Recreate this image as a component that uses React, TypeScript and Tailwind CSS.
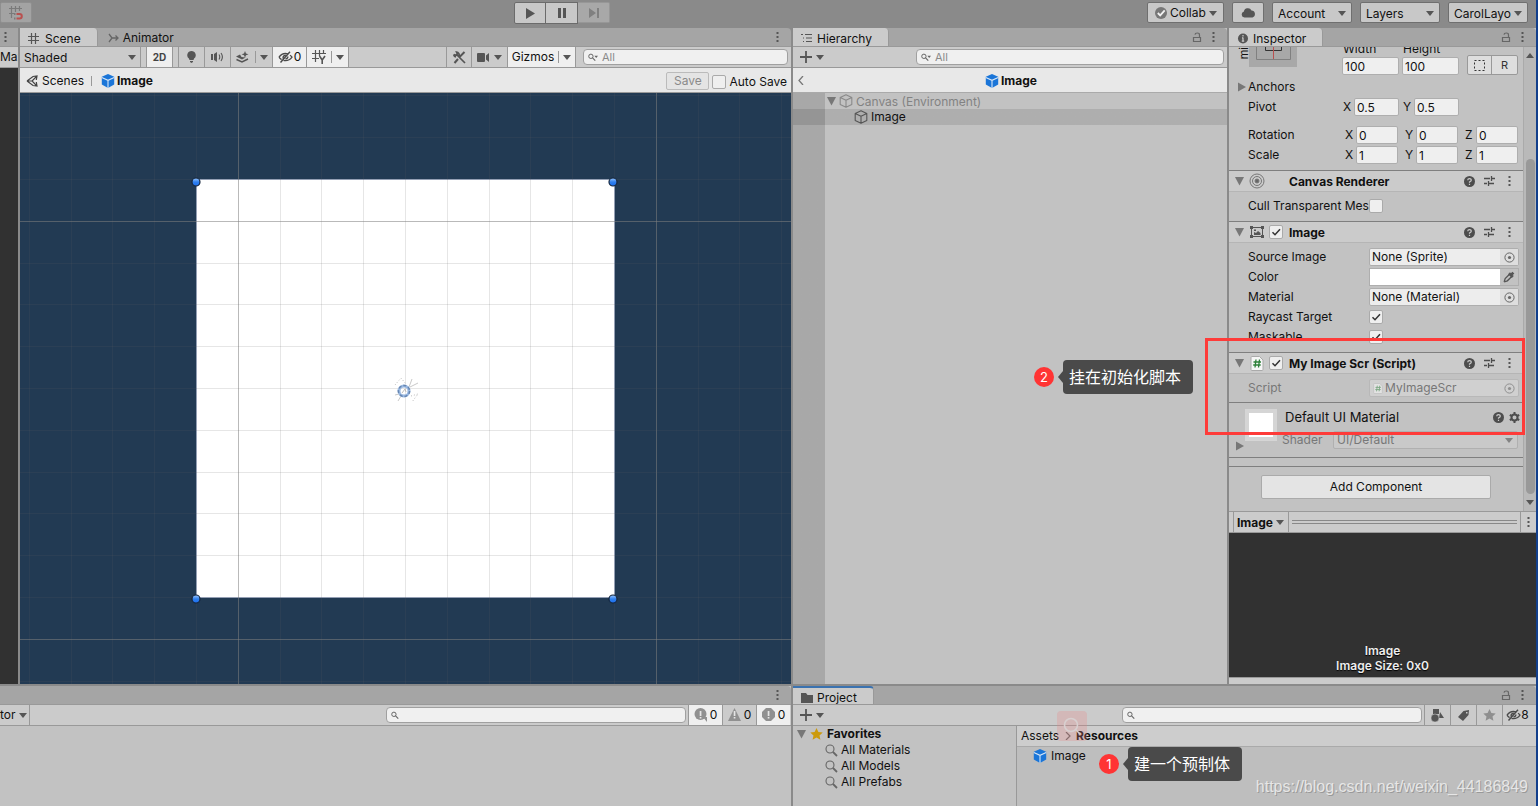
import type { ReactNode } from "react";

const FONT = "font-['Inter','Noto_Sans_CJK_SC',sans-serif]";

/* ---------- icons ---------- */

const Caret = ({ className = "" }: { className?: string }) => (
  <svg width="8" height="5" viewBox="0 0 8 5" className={`pointer-events-none shrink-0 fill-[#555] ${className}`}><path d="M0 0h8L4 5z" /></svg>
);

const Fold = ({ open = true }: { open?: boolean }) => (
  <svg width="10" height="10" viewBox="0 0 10 10" className="shrink-0 fill-[#777]">
    {open ? <path d="M1 1h9L5.5 9.5z" /> : <path d="M2 0.5v9L10 5z" />}
  </svg>
);

const Dots = () => (
  <svg width="3" height="11" viewBox="0 0 3 11" className="shrink-0 fill-[#555]"><path d="M.5 0h2v2h-2zM.5 4h2v2h-2zM.5 8h2v2h-2z" /></svg>
);

const Lock = () => (
  <svg width="10" height="11" viewBox="0 0 10 11" className="shrink-0 fill-none stroke-[#666]"><path d="M1.5 5.5h7v4h-7zM7.5 5V3Q7.5 1 5.3 1T3 2.6" strokeWidth="1.2" /></svg>
);

const HashGrid = ({ color = "#555", y = false, magnet = false }: { color?: string; y?: boolean; magnet?: boolean }) => (
  <svg width={y || magnet ? 15 : 13} height="14" viewBox={y || magnet ? "0 0 15 14" : "0 0 13 14"} className="shrink-0 fill-none" stroke={color}>
    {y ? (
      <>
        <path d="M3.5 0v12M7.5 0v6M11.5 0v4M0 3.5h14M0 8.5h7" strokeWidth="1.2" />
        <path d="M7.5 6l2.7 4M13 6l-2.8 4v4" strokeWidth="1.6" />
      </>
    ) : magnet ? (
      <>
        <path d="M2.5 0v12M6.5 0v6M10.5 0v5M0 2.5h13M0 7.5h5" strokeWidth="1.2" />
        <path d="M7.5 8h3a2 2 0 0 1 0 4.6h-3" stroke="#b9504f" strokeWidth="2" />
        <path d="M5 8h1.5M5 12.6h1.5" strokeWidth="2" />
      </>
    ) : (
      <path d="M3.500 1v11M7.500 1v11M0 4.500h11M0 8.500h11" strokeWidth="1.2" />
    )}
  </svg>
);

const Cube = ({ outline = "" }: { outline?: string }) =>
  outline ? (
    <svg width="14" height="14" viewBox="0 0 14 14" className="shrink-0 fill-none" stroke={outline}>
      <path d="M7 .8l5.8 2.6v7L7 13.3 1.2 10.4v-7zM1.2 3.6L7 6.3l5.8-2.7M7 6.3v7" strokeWidth="1.1" strokeLinejoin="round" />
    </svg>
  ) : (
    <svg width="14" height="14" viewBox="0 0 14 14" className="shrink-0">
      <path d="M7 0l6.2 2.7v7.8L7 14 .8 10.5V2.7z" fill="#1a75d8" />
      <path d="M.8 3.4L7 6.3l6.2-2.9M7 6.3V14" fill="none" stroke="#d5e6f7" strokeWidth="1.1" />
    </svg>
  );

const Magnifier = ({ caret = false }: { caret?: boolean }) => (
  <svg width="10" height="9" viewBox="0 0 11 9" className="shrink-0 fill-none stroke-[#666]">
    <circle cx="3.2" cy="3.2" r="2.4" strokeWidth="1.1" />
    <path d="M5 5l3 3" strokeWidth="1.3" />
    {caret && <path d="M7 2.6h4L9 5z" fill="#666" stroke="none" />}
  </svg>
);

const BigMagnifier = () => (
  <svg width="13" height="13" viewBox="0 0 13 13" className="shrink-0 fill-none stroke-[#666]"><circle cx="5" cy="5" r="4" strokeWidth="1.1" /><path d="M8 8l4 4" strokeWidth="1.8" /></svg>
);

const EyeOff = () => (
  <svg width="15" height="12" viewBox="0 0 15 12" className="shrink-0 fill-none stroke-[#4a4a4a]">
    <path d="M1 6.2Q3.5 2.5 7.5 2.5q1.5 0 2.5.4M12 4.2q1.3.9 2 2Q11.5 9.7 7.5 9.7q-1 0-2-.3M3.6 8.6Q2 7.6 1 6.2" strokeWidth="1.3" />
    <path d="M5.2 7.6Q4.5 4.6 7.8 4.2M7.5 8Q9.8 7.8 9.9 5.5M2.5 11.5L12 .8" strokeWidth="1.4" />
  </svg>
);

const Help = () => (
  <svg width="11" height="11" viewBox="0 0 10 10" className="shrink-0">
    <circle cx="5" cy="5" r="5" fill="#4d4d4d" />
    <path d="M3.4 3.9Q3.4 2.4 5 2.4T6.6 3.8Q6.6 4.6 5 5.4v.7M5 7v1.2" fill="none" stroke="#cbcbcb" strokeWidth="1.1" />
  </svg>
);

const Presets = () => (
  <svg width="11" height="10" viewBox="0 0 11 10" className="shrink-0 fill-none stroke-[#4d4d4d]"><path d="M0 2.500h6M8 2.500h3M7.500 0v5M0 7.500h3M5 7.500h5M4.500 5v5" strokeWidth="1.3" /></svg>
);

const Gear = () => (
  <svg width="11" height="11" viewBox="0 0 11 11" className="shrink-0 fill-none stroke-[#4d4d4d]">
    <circle cx="5.5" cy="5.5" r="3" strokeWidth="2" />
    <path d="M5.5 0v2M5.5 9v2M.8 2.8l1.7 1M8.5 7.2l1.7 1M.8 8.2l1.7-1M8.5 3.8l1.7-1" strokeWidth="2" />
  </svg>
);

const CsFile = ({ size = 14, faded = false }: { size?: number; faded?: boolean }) => (
  <svg width={size} height={size + 1} viewBox="0 0 14 15" className={`shrink-0 ${faded ? "opacity-50" : ""}`}>
    <path d="M1 1.5Q1 .5 2 .5h7.5L13 4v9.5q0 1-1 1H2q-1 0-1-1z" fill="#f6f6f6" stroke="#aaa" />
    <path d="M6 3.500L5 11.500M9.500 3.500l-1 8M3.5 6h7.500M3.2 9h7.500" stroke="#2c8038" strokeWidth="1.3" />
  </svg>
);

const Picker = () => (
  <svg width="11" height="11" viewBox="0 0 11 11" className="shrink-0"><circle cx="5.5" cy="5.5" r="4.6" fill="none" stroke="#666" /><circle cx="5.5" cy="5.5" r="1.6" fill="#666" /></svg>
);

const Star = ({ color }: { color: string }) => (
  <svg width="13" height="12" viewBox="0 0 13 12" className="shrink-0"><path fill={color} d="M6.5 0l1.9 4 4.3.5-3.2 3 .9 4.3-3.9-2.2-3.9 2.2.9-4.3-3.2-3L4.6 4z" /></svg>
);

/* ---------- shared controls ---------- */

function TabStrip({ icon, title, lock, focused, children }: { icon?: ReactNode; title?: string; lock?: boolean; focused?: boolean; children?: ReactNode }) {
  return (
    <div className="flex h-[19px] shrink-0 overflow-hidden rounded-tr border-b border-[#999] bg-[#a5a5a5]">
      {title && (
        <button className={`-mb-px flex h-[19px] items-center gap-1 rounded-tr border-r border-[#999] bg-[#cbcbcb] pl-2 pr-4 pt-0.5 ${focused ? "border-t-2 border-t-[#3a72b0] pt-0" : ""}`}>
          {icon}
          <span>{title}</span>
        </button>
      )}
      {children}
      <div className="ml-auto flex items-center gap-2 pr-3">
        {lock && <button aria-label="Lock" className="mr-0.5"><Lock /></button>}
        <button aria-label="Tab menu"><Dots /></button>
      </div>
    </div>
  );
}

const Toolbar = ({ children }: { children: ReactNode }) => (
  <div className="flex h-[21px] shrink-0 items-center border-b border-[#999] bg-[#cbcbcb]">{children}</div>
);

function Search({ label, placeholder, className }: { label: string; placeholder?: string; className: string }) {
  return (
    <label className={`flex h-4 items-center gap-1 rounded border border-[#a0a0a0] bg-[#f0f0f0] px-1 ${className}`}>
      <Magnifier caret={!!placeholder} />
      <input aria-label={label} placeholder={placeholder} className="h-3.5 w-full min-w-0 bg-transparent text-[11px] outline-none placeholder:text-[#8a8a8a]" />
    </label>
  );
}

function ToolButton({ label, on, className, children }: { label: string; on?: boolean; className: string; children: ReactNode }) {
  return (
    <button aria-label={label} className={`flex h-5 shrink-0 items-center justify-center border-[#999] ${on ? "bg-[#efefef]" : "bg-[#cbcbcb]"} ${className}`}>
      {children}
    </button>
  );
}

function TopSelect({ label, value, className }: { label: string; value: string; className: string }) {
  return (
    <div className={`relative h-[21px] rounded-xs border border-[#6f6f6f] bg-[#c8c8c8] ${className}`}>
      <select aria-label={label} className="h-full w-full appearance-none pl-[5px] pt-0.5 outline-none"><option>{value}</option></select>
      <Caret className="absolute right-[5px] top-2" />
    </div>
  );
}

const Check = ({ label, checked = false }: { label: string; checked?: boolean }) => (
  <span className="relative flex size-3.5 shrink-0">
    <input type="checkbox" aria-label={label} defaultChecked={checked} className="peer size-3.5 appearance-none rounded-xs border border-[#aaa] bg-[#efefef]" />
    <svg viewBox="0 0 14 14" className="pointer-events-none absolute inset-0 hidden fill-none stroke-[#333] peer-checked:block"><path d="M3.5 7.2L6 9.7l5-5.5" strokeWidth="1.5" /></svg>
  </span>
);

const NumField = ({ label, value, className = "w-[42px]" }: { label: string; value: string; className?: string }) => (
  <input aria-label={label} defaultValue={value} className={`h-[18px] rounded-xs border border-[#aeaeae] bg-[#efefef] pl-0.5 outline-none ${className}`} />
);

/* ---------- top bar ---------- */

function TopBar() {
  return (
    <header className="flex h-7 shrink-0 items-start bg-[#8a8a8a] pt-0.5">
      <button aria-label="Grid snapping" className="flex h-[21px] w-8 items-center justify-center rounded-xs border border-[#8f8f8f] bg-[#a3a3a3]"><HashGrid color="#7a7a7a" magnet /></button>
      <div className="flex-[482]" />
      <div className="flex">
        <button aria-label="Play" className="flex h-[22px] w-8 items-center justify-center rounded-l-xs border border-[#6b6b6b] bg-[#c8c8c8]"><svg width="9" height="11" className="fill-[#555]"><path d="M0 0l9 5.5L0 11z" /></svg></button>
        <button aria-label="Pause" className="-ml-px flex h-[22px] w-[33px] items-center justify-center border border-[#6b6b6b] bg-[#c8c8c8]"><svg width="8" height="10" className="fill-[#555]"><path d="M0 0h3v10H0zM5 0h3v10H5z" /></svg></button>
        <button aria-label="Step" disabled className="flex h-[21px] w-8 items-center justify-center rounded-r-xs border border-l-0 border-[#979797] bg-[#a8a8a8]"><svg width="10" height="10" className="fill-[#808080]"><path d="M0 0l7 5-7 5zM8 0h2v10H8z" /></svg></button>
      </div>
      <div className="flex-[536]" />
      <div className="flex gap-2 pr-2">
        <button className="flex h-[21px] w-[77px] items-center gap-[3px] rounded-xs border border-[#6f6f6f] bg-[#c8c8c8] pl-[7px] pt-px">
          <svg width="12" height="12" viewBox="0 0 12 12"><circle cx="6" cy="6" r="6" fill="#777" /><path d="M2.8 6l2.4 2.4 4.5-5" fill="none" stroke="#f2f2f2" strokeWidth="1.8" /></svg>
          Collab <Caret />
        </button>
        <button aria-label="Services" className="flex h-[21px] w-8 items-center justify-center rounded-xs border border-[#6f6f6f] bg-[#c8c8c8]"><svg width="15" height="11" viewBox="0 0 15 11" className="fill-[#555]"><path d="M3.5 10.5a3 3 0 0 1-.6-5.9A4 4 0 0 1 10.5 3.500A3.600 3.600 0 0 1 11.5 10.500z" /></svg></button>
        <TopSelect label="Account" value="Account" className="w-20" />
        <TopSelect label="Layers" value="Layers" className="w-20" />
        <TopSelect label="Layout" value="CarolLayo" className="w-20" />
      </div>
    </header>
  );
}

/* ---------- scene ---------- */

const CELL = 41.8;
const LEFT = 176;
const TOP = 86;

function SceneCanvas() {
  const xs = Array.from({ length: 60 }, (_, i) => i - 4);
  const ys = Array.from({ length: 40 }, (_, i) => i - 2);
  const line = (n: number) => (((n - 1) % 10) === 0 ? "#8080808c" : "#60606028");
  return (
    <div className="relative min-h-0 flex-1 overflow-hidden bg-[#223a53]">
      <svg className="absolute inset-0 h-full w-full">
        <defs>
          <linearGradient id="handle" x1="0" y1="0" x2="0" y2="1"><stop offset="0" stopColor="#9cc8ff" /><stop offset=".5" stopColor="#2f80ee" /><stop offset="1" stopColor="#1a6df0" /></linearGradient>
        </defs>
        <rect x={LEFT} y={TOP} width="418" height="418" fill="#fff" stroke="#9eabc4" strokeWidth="1" shapeRendering="crispEdges" />
        {xs.map((n) => <rect key={`x${n}`} x={Math.round(LEFT + n * CELL)} y="0" width="1" height="100%" fill={line(n)} />)}
        {ys.map((n) => <rect key={`y${n}`} x="0" y={Math.round(TOP + n * CELL)} width="100%" height="1" fill={line(n)} />)}
        {[[176, 89], [593, 89], [176, 506], [593, 506]].map(([x, y]) => (
          <circle key={`${x}-${y}`} cx={x} cy={y} r="4" fill="url(#handle)" stroke="#16263c" strokeWidth="1.2" />
        ))}
        <g fill="none" transform="translate(384 298)">
          <path d="M5-4l3-8M6-4l8-4M-3 5l-3 5M-5 3l-4 1" stroke="#c9c9c9" />
          <path d="M-9-6l6-7 5 6M7 5l7-2-6 8" stroke="#bbb" strokeDasharray="1 2" />
          <circle r="5" stroke="#9ab9e2" strokeWidth="3" />
          <circle r="5.600" stroke="#6685b0" strokeWidth="1.500" strokeDasharray="3 2" />
          <path d="M-2 2l3-4 1 3" stroke="#bbb" />
        </g>
      </svg>
    </div>
  );
}

function ScenePanel() {
  return (
    <section className="flex min-h-0 flex-col">
      <TabStrip icon={<HashGrid />} title="Scene">
        <button className="flex items-center gap-1 pl-2.5 pt-0.5">
          <svg width="11" height="10" viewBox="0 0 11 10" className="fill-none stroke-[#666]"><path d="M1 1l3 4M1 9l3-4h6M7.5 2.500L10 5 7.500 7.500" strokeWidth="1.3" /></svg>
          Animator
        </button>
      </TabStrip>
      <Toolbar>
        <div className="relative flex h-5 w-[121px] shrink-0 items-center border-r border-[#999]">
          <select aria-label="Shading mode" className="h-5 w-full appearance-none pl-1 pt-px outline-none"><option>Shaded</option></select>
          <Caret className="absolute right-1 top-2" />
        </div>
        <ToolButton label="2D view" on className="ml-[5px] w-[27px] border-x text-[10px] font-bold text-[#444]">2D</ToolButton>
        <ToolButton label="Lighting" className="ml-[5px] w-[27px] border-x">
          <svg width="9" height="12" viewBox="0 0 9 12" className="fill-[#555]"><path d="M4.500 0a4.200 4.200 0 0 1 2.600 7.500L6.500 9h-4l-.6-1.500A4.200 4.200 0 0 1 4.500 0zM3 10h3v1L4.500 12 3 11z" /></svg>
        </ToolButton>
        <ToolButton label="Audio" className="w-[26px] border-r">
          <svg width="13" height="10" viewBox="0 0 13 10" className="fill-[#555]"><path d="M0 2h2v6H0zM3 2l3-2v10L3 8z" /><path d="M8 2.500q1.500 2.500 0 5M10 1q2.800 4 0 8" fill="none" stroke="#555" strokeWidth="1.1" /></svg>
        </ToolButton>
        <ToolButton label="Effects" className="w-[42px] gap-1.5 border-r">
          <svg width="13" height="12" viewBox="0 0 13 12" className="fill-[#555]"><path d="M0 5.500L4 3.500l1.500 2.500 4 .5L11.500 5.500 6 8.500z" /><path d="M.5 8.500L6 11l6-3" fill="none" stroke="#555" strokeWidth="1.4" /><path d="M9 0l1 2.500 2.500.8L10 4.300 9 6.500 8 4.300 5.500 3.300 8 2.500z" /></svg>
          <span className="h-3 w-px bg-[#999]" />
          <Caret className="-ml-0.5" />
        </ToolButton>
        <ToolButton label="Hidden objects" on className="w-[34px] gap-px border-r"><EyeOff />0</ToolButton>
        <ToolButton label="Grid" on className="w-[42px] gap-1 border-r"><HashGrid y /><span className="h-3 w-px bg-[#999]" /><Caret /></ToolButton>
        <div className="flex-1" />
        <ToolButton label="Component tools" className="w-[26px] border-x">
          <svg width="13" height="13" viewBox="0 0 13 13" className="fill-none stroke-[#555]"><path d="M11.500 1L6.500 6M5 8l-3.500 4" strokeWidth="2" /><path d="M4 4l8 8M1 3.500l2 .8 1.300-1.300L3.500 1A3 3 0 0 1 6 5M3 6a3 3 0 0 1-2.300-2.500" strokeWidth="1.700" /></svg>
        </ToolButton>
        <ToolButton label="Scene camera" className="w-[35px] gap-[5px]">
          <svg width="12" height="9" viewBox="0 0 12 9" className="fill-[#555]"><path d="M0 1q0-1 1-1h6q1 0 1 1v7q0 1-1 1H1Q0 9 0 8zM9 2.500L12 0v9L9 6.500z" /></svg>
          <Caret />
        </ToolButton>
        <ToolButton label="Gizmos" on className="w-[69px] gap-1 border-x">Gizmos<span className="h-3 w-px bg-[#999]" /><Caret /></ToolButton>
        <Search label="Search scene" placeholder="All" className="ml-[7px] mr-[3px] w-[205px]" />
      </Toolbar>
      <div className="flex h-[25px] shrink-0 items-center border-b border-[#999] bg-[#e8e8e8] pl-1.5 pr-1 pt-px">
        <svg width="12" height="12" viewBox="0 0 12 12" className="fill-none stroke-[#444]"><path d="M1 6L7 1.500 11 1l-.7 4M1 6l6 4.500 4 .5-.7-4M1 6h5M11 1L6 6l5 5" strokeWidth="1.200" /></svg>
        <a href="#scenes" className="ml-1">Scenes</a>
        <span className="ml-[7px] h-2.5 w-px bg-[#999]" />
        <span className="ml-[9px] mr-0.5 flex"><Cube /></span>
        <span className="font-bold">Image</span>
        <button disabled className="ml-auto h-[18px] w-[43px] rounded-xs border border-[#bbb] bg-[#e4e4e4] text-[#8a8a8a]">Save</button>
        <label className="ml-[3px] flex items-center gap-[3px] pt-0.5"><Check label="Auto Save" />Auto Save</label>
      </div>
      <SceneCanvas />
    </section>
  );
}

/* ---------- hierarchy ---------- */

function HierarchyPanel() {
  return (
    <section className="flex min-h-0 flex-col bg-[#c2c2c2]">
      <TabStrip lock title="Hierarchy" icon={<svg width="12" height="12" viewBox="0 0 12 12" className="fill-none stroke-[#555]"><path d="M0 1.500h2M4 1.500h7M2 5h1M5 5h6M2 8.500h1M5 8.500h6" strokeWidth="1.200" /></svg>} />
      <Toolbar>
        <button aria-label="Create" className="flex items-center gap-1 pl-[7px]">
          <svg width="12" height="12" className="stroke-[#555]"><path d="M6 0v12M0 6h12" strokeWidth="1.800" /></svg>
          <Caret />
        </button>
        <Search label="Search hierarchy" placeholder="All" className="ml-auto mr-[3px] w-[308px]" />
      </Toolbar>
      <div className="flex h-[25px] shrink-0 items-center border-b border-[#aaa] bg-[#e8e8e8] px-[5px] pt-px">
        <button aria-label="Back"><svg width="6" height="9" className="fill-none stroke-[#777]"><path d="M5 0L1 4.500 5 9" strokeWidth="1.300" /></svg></button>
        <div className="flex flex-1 items-center justify-center gap-0.5 pr-1 font-bold"><Cube />Image</div>
      </div>
      <div className="flex-1 bg-linear-to-r from-[#a8a8a8] from-[32px] to-[#c2c2c2] to-[32px]">
        <div className="flex h-4 items-center gap-[3px] pl-[33px] text-[#828282]"><Fold /><Cube outline="#8a8a8a" /><span className="pt-px">Canvas (Environment)</span></div>
        <div className="flex h-4 items-center gap-[3px] bg-linear-to-r from-[#959595] from-[32px] to-[#aeaeae] to-[32px] pl-[61px]"><Cube outline="#555" /><span>Image</span></div>
      </div>
    </section>
  );
}

/* ---------- inspector ---------- */

function ComponentHeader({ icon, title, toggle }: { icon: ReactNode; title: string; toggle?: boolean }) {
  return (
    <div className="flex h-[21px] items-center border-b border-[#b5b5b5] bg-[#cbcbcb] pl-[5px] pr-3">
      <button aria-label={`Fold ${title}`}><Fold /></button>
      <span className="ml-1.5 flex w-[14px] justify-center">{icon}</span>
      <span className="ml-[5px] w-[14px]">{toggle && <Check label={`${title} enabled`} checked />}</span>
      <h2 className="ml-1.5 flex-1 pt-px font-bold">{title}</h2>
      <div className="flex items-center gap-[9px]">
        <button aria-label="Help"><Help /></button>
        <button aria-label="Presets"><Presets /></button>
        <button aria-label="Component menu" className="ml-1"><Dots /></button>
      </div>
    </div>
  );
}

const Row = ({ label, faded, children }: { label: string; faded?: boolean; children: ReactNode }) => (
  <div className="flex h-[18px] items-center pr-1">
    <span className={`w-[122px] shrink-0 overflow-hidden whitespace-nowrap pl-px ${faded ? "text-[#777]" : ""}`}>{label}</span>
    {children}
  </div>
);

const ObjectField = ({ label, value, script }: { label: string; value: string; script?: boolean }) => (
  <div className={`flex h-[18px] flex-1 items-center overflow-hidden rounded-xs border ${script ? "border-[#b8b8b8] bg-[#d0d0d0] text-[#777]" : "border-[#aeaeae] bg-[#ededed]"}`}>
    {script && <span className="ml-[3px] flex"><CsFile size={10} faded /></span>}
    <input aria-label={label} readOnly disabled={script} value={value} className="w-full min-w-0 flex-1 bg-transparent pl-0.5 outline-none" />
    <button aria-label={`Pick ${label}`} disabled={script} className={`flex h-full w-[18px] items-center justify-center ${script ? "opacity-60" : "bg-[#dedede]"}`}><Picker /></button>
  </div>
);

function RectTransform() {
  return (
    <div className="border-b border-[#7f7f7f] pb-1.5">
      <div className="-mt-2 flex h-9 pr-[5px]">
        <span className="flex w-5 items-end justify-end pb-4 text-[11px] leading-[9px]"><span className="rotate-180 [writing-mode:vertical-rl]">mi</span></span>
        <svg width="48" height="28" viewBox="0 0 48 28" className="fill-none">
          <rect width="48" height="28" fill="#a8a8a8" />
          <path d="M7.500 0v20.500h34V0" stroke="#808080" />
          <path d="M16.500 0v11.500h16V0" stroke="#333" />
          <path d="M24.500 8v12" stroke="#b9504f" />
        </svg>
        <div className="ml-[45px] flex gap-[3px]">
          <label className="flex w-[57px] flex-col"><span className="h-[18px] pl-px leading-5">Width</span><NumField label="Width" value="100" className="w-full" /></label>
          <label className="flex w-[57px] flex-col"><span className="h-[18px] pl-px leading-5">Height</span><NumField label="Height" value="100" className="w-full" /></label>
        </div>
        <div className="ml-auto mt-4 flex h-5 rounded-xs border border-[#999] bg-[#dedede] text-[11px] text-[#333]">
          <button aria-label="Blueprint mode" className="flex w-6 items-center justify-center border-r border-[#999]"><svg width="11" height="11" className="fill-none stroke-[#333]"><rect x=".5" y=".5" width="10" height="10" strokeDasharray="2 2" /></svg></button>
          <button className="w-[25px]">R</button>
        </div>
      </div>
      <div className="flex flex-col gap-0.5 pt-[3px]">
        <div className="flex h-[18px] items-center gap-0.5 pl-[7px]"><Fold open={false} /><span>Anchors</span></div>
        <div className="flex h-[18px] items-center pl-[19px]">
          <span className="w-[95px]">Pivot</span>
          <span className="w-[11px]">X</span><NumField label="Pivot X" value="0.5" className="w-[45px]" />
          <span className="ml-1 w-[11px]">Y</span><NumField label="Pivot Y" value="0.5" className="w-[45px]" />
        </div>
        {[["Rotation", "0"], ["Scale", "1"]].map(([name, value], i) => (
          <div key={name} className={`flex h-[18px] items-center pl-[19px] pr-[5px] ${i === 0 ? "mt-2" : ""}`}>
            <span className="flex-1">{name}</span>
            {["X", "Y", "Z"].map((axis) => (
              <span key={axis} className="flex w-[60px] shrink-0 items-center justify-end">
                <span className="w-[11px]">{axis}</span><NumField label={`${name} ${axis}`} value={value} />
              </span>
            ))}
          </div>
        ))}
      </div>
    </div>
  );
}

function InspectorBody() {
  return (
    <div className="min-w-0 flex-1 overflow-hidden">
      <RectTransform />
      <div className="border-b border-[#7f7f7f]">
        <ComponentHeader title="Canvas Renderer" icon={<svg width="16" height="16" viewBox="0 0 16 16" className="shrink-0 fill-none stroke-[#777]"><circle cx="8" cy="8" r="7" /><circle cx="8" cy="8" r="4.500" /><circle cx="8" cy="8" r="2" fill="#666" /></svg>} />
        <div className="pb-1.5 pl-[18px] pt-[5px]"><Row label="Cull Transparent Mesh"><Check label="Cull Transparent Mesh" /></Row></div>
      </div>
      <div className="border-b border-[#7f7f7f]">
        <ComponentHeader toggle title="Image" icon={<svg width="14" height="12" viewBox="0 0 14 12" className="shrink-0 fill-none stroke-[#555]"><path d="M1.500 1.500h11v9h-11z" /><path d="M0 0h3v3H0zM11 0h3v3h-3zM0 9h3v3H0zM11 9h3v3h-3zM4 9V6l2 1 2-2 2.500 2v2zM4 3.500h2v1.500H4z" fill="#555" stroke="none" /></svg>} />
        <div className="flex flex-col gap-0.5 pb-1.5 pl-[18px] pt-[5px]">
          <Row label="Source Image"><ObjectField label="Source Image" value="None (Sprite)" /></Row>
          <Row label="Color">
            <div className="flex h-[18px] flex-1 border border-[#aeaeae]">
              <button aria-label="Color" className="flex-1 bg-white" />
              <button aria-label="Eyedropper" className="flex w-[18px] items-center justify-center"><svg width="12" height="12" viewBox="0 0 11 11" className="fill-none stroke-[#555]"><path d="M1 10l1-3 4-4M1 10l3-1 4-4" strokeWidth="1.200" /><path d="M5.500 2l3.500 3.500M7 4l2.500-2.500" strokeWidth="2.500" /></svg></button>
            </div>
          </Row>
          <Row label="Material"><ObjectField label="Material" value="None (Material)" /></Row>
          <Row label="Raycast Target"><Check label="Raycast Target" checked /></Row>
          <Row label="Maskable"><Check label="Maskable" checked /></Row>
        </div>
      </div>
      <div className="border-b border-[#7f7f7f]">
        <ComponentHeader toggle title="My Image Scr (Script)" icon={<CsFile />} />
        <div className="pb-[5px] pl-[18px] pt-[5px]"><Row label="Script" faded><ObjectField script label="Script" value="MyImageScr" /></Row></div>
      </div>
      <div className="flex h-[55px] border-b border-[#7f7f7f]">
        <button aria-label="Fold material" className="self-end pb-1.5 pl-[5px]"><Fold open={false} /></button>
        <div className="ml-px mt-1.5 size-8 shrink-0 border-4 border-[#d5d5d5] bg-white" />
        <div className="flex min-w-0 flex-1 flex-col pl-[5px] pt-1.5">
          <div className="flex h-4 items-center pl-[3px]">
            <h2 className="flex-1 text-[13px]">Default UI Material</h2>
            <button aria-label="Material help"><Help /></button>
            <button aria-label="Material settings" className="ml-[5px] mr-[3px]"><Gear /></button>
          </div>
          <div className="mt-1.5 flex h-[18px] items-center pr-[5px] text-[#777]">
            <span className="w-[51px]">Shader</span>
            <div className="relative flex-1 rounded-xs border border-[#b0b0b0] bg-[#c9c9c9]">
              <select aria-label="Shader" disabled className="block h-4 w-full appearance-none pl-[3px]"><option>UI/Default</option></select>
              <Caret className="absolute right-1 top-1.5 opacity-60" />
            </div>
          </div>
        </div>
      </div>
      <div className="h-[9px] border-b border-[#7f7f7f]" />
      <div className="px-8 pb-3 pt-2">
        <button className="block h-6 w-full rounded-xs border border-[#aaa] bg-[#e4e4e4]">Add Component</button>
      </div>
    </div>
  );
}

function Callout({ n, text, className }: { n: number; text: string; className: string }) {
  return (
    <div className={`absolute z-10 flex items-center whitespace-nowrap ${className}`}>
      <span className="flex size-5 items-center justify-center rounded-full bg-[#ff3434] text-[13px] text-white">{n}</span>
      <svg width="5" height="12" className="ml-1 fill-[#4a4a4a]"><path d="M5 0v12L0 6z" /></svg>
      <span className="h-[34px] rounded-sm bg-[#4a4a4a] pl-1.5 pr-3 text-base leading-[34px] text-white">{text}</span>
    </div>
  );
}

function InspectorPanel() {
  return (
    <section className="relative flex min-h-0 flex-col bg-[#c2c2c2]">
      <TabStrip lock title="Inspector" icon={<svg width="12" height="12" viewBox="0 0 12 12"><circle cx="6" cy="5.500" r="5" fill="#555" /><path d="M6 2v1.500M6 4.500v4M5 4.800h1M4.800 8.100h2.400" stroke="#cbcbcb" strokeWidth="1.200" /></svg>} />
      <div className="flex shrink-0">
        <InspectorBody />
        <div className="flex w-[13px] flex-col items-center border-l border-[#aaa] bg-[#b9b9b9] py-1.5">
          <Caret className="rotate-180" />
          <div className="mb-1.5 mt-[101px] w-[9px] flex-1 rounded-full bg-[#999]" />
          <Caret />
        </div>
      </div>
      <div className="flex h-[22px] shrink-0 items-center border-y border-[#999] bg-[#cbcbcb] pl-1">
        <button className="flex h-full w-14 items-center gap-[3px] border-x border-[#999] pl-[3px] pt-px font-bold">Image<Caret /></button>
        <div className="mx-[3px] h-1 flex-1 border-y border-[#888]" />
        <button aria-label="Preview menu" className="flex h-full w-4 items-center justify-center border-l border-[#999]"><Dots /></button>
      </div>
      <div className="flex min-h-0 flex-1 flex-col items-center justify-end bg-[#313131] pb-1 text-center font-semibold leading-[15px] text-[#eee] [text-shadow:0_1px_1px_#000]">
        <p>Image</p>
        <p>Image Size: 0x0</p>
      </div>
      <div className="h-[7px] shrink-0 border-t border-[#999] bg-[#cbcbcb]" />
      <div className="pointer-events-none absolute -left-6 right-[11px] top-[310px] z-10 h-[97px] border-[3px] border-[#fe3b39]" />
      <Callout n={2} text="挂在初始化脚本" className="right-[343px] top-[332px]" />
    </section>
  );
}

/* ---------- bottom panels ---------- */

const COUNTERS = [
  { label: "Messages", on: true, icon: <><circle cx="6.500" cy="6" r="6" /><path d="M9 9h4v5z" /></> },
  { label: "Warnings", on: false, icon: <path d="M6.500 0l6.500 13H0z" /> },
  { label: "Errors", on: true, icon: <path d="M4 0h5l4 4v5l-4 4H4L0 9V4z" /> },
];

function ConsolePanel() {
  return (
    <section className="col-span-2 flex min-h-0 flex-col bg-[#c2c2c2]">
      <TabStrip />
      <Toolbar>
        <button className="flex h-5 w-[30px] shrink-0 items-center gap-[3px] border-r border-[#999]">tor<Caret /></button>
        <div className="flex-[356]" />
        <Search label="Search console" className="mr-[2px] flex-[290]" />
        {COUNTERS.map(({ label, on, icon }) => (
          <ToolButton key={label} label={label} on={on} className="w-[34px] gap-[3px] border-l last:mr-px">
            <svg width="13" height="14" viewBox="0 0 13 14" className="fill-[#909090]">{icon}<path d="M5.700 3h1.700v5H5.700zM5.700 9h1.700v1.600H5.700z" fill="#e5e5e5" /></svg>0
          </ToolButton>
        ))}
      </Toolbar>
    </section>
  );
}

function ProjectPanel() {
  return (
    <section className="relative col-span-2 flex min-h-0 flex-col bg-[#c2c2c2]">
      <TabStrip lock focused title="Project" icon={<svg width="12" height="10" className="fill-[#555]"><path d="M0 0h5l1.500 2H12v8H0z" /></svg>} />
      <Toolbar>
        <button aria-label="Create asset" className="flex items-center gap-1 pl-[7px]">
          <svg width="12" height="12" className="stroke-[#555]"><path d="M6 0v12M0 6h12" strokeWidth="1.800" /></svg>
          <Caret />
        </button>
        <Search label="Search project" className="ml-auto mr-[2px] w-[300px]" />
        <ToolButton label="Search by type" className="w-[26px] border-l"><svg width="13" height="13" className="fill-[#555]"><path d="M2 0h6v5H2zM9 3l4 6H8z" /><circle cx="4" cy="9" r="4" stroke="#cbcbcb" strokeWidth=".5" /></svg></ToolButton>
        <ToolButton label="Search by label" className="w-[26px] border-l"><svg width="11" height="11" viewBox="0 0 11 11" className="fill-[#555]"><path fillRule="evenodd" d="M5.500 1L11 0l-.5 5L5 11 0 7zM8 2v1.500h1.500V2z" /></svg></ToolButton>
        <ToolButton label="Save search" className="w-[26px] border-l"><Star color="#8f8f8f" /></ToolButton>
        <ToolButton label="Hidden packages" className="w-[34px] border-l pr-1"><EyeOff />8</ToolButton>
      </Toolbar>
      <div className="flex min-h-0 flex-1">
        <nav className="w-[224px] shrink-0 border-r border-[#999]">
          <div className="flex h-4 items-center pl-[3px] font-bold"><Fold /><span className="mx-1"><Star color="#cc9a0b" /></span>Favorites</div>
          {["All Materials", "All Models", "All Prefabs"].map((name) => (
            <a key={name} href="#search" className="flex h-4 items-center gap-[3px] pl-8"><BigMagnifier />{name}</a>
          ))}
        </nav>
        <div className="flex min-w-0 flex-1 flex-col bg-[#bebebe]">
          <div className="flex h-[21px] shrink-0 items-center border-b border-[#aaa] bg-[#cdcdcd] pl-1">
            <a href="#assets">Assets</a>
            <svg width="6" height="8" className="ml-[6px] mr-[5px] fill-none stroke-[#666]"><path d="M1 0l4 4-4 4" strokeWidth="1.200" /></svg>
            <span className="font-bold">Resources</span>
          </div>
          <div className="flex h-[18px] items-center gap-1 pl-4"><Cube />Image</div>
        </div>
      </div>
      <div className="pointer-events-none absolute left-[264px] top-[25px] flex size-[30px] items-center justify-center rounded bg-[#e8848444]">
        <svg width="18" height="18" className="fill-none stroke-[#d8d0d0]"><circle cx="8" cy="8" r="6.500" strokeWidth="1.600" /><path d="M13 13l4 4" strokeWidth="1.600" /></svg>
      </div>
      <Callout n={1} text="建一个预制体" className="left-[306px] top-[61px]" />
      <p className="absolute bottom-[9px] right-2 font-['Liberation_Sans',sans-serif] text-base leading-5 text-[#e6e6e6] [text-shadow:1px_1px_0_#999]">https://blog.csdn.net/weixin_44186849</p>
    </section>
  );
}

export default function App() {
  return (
    <div className={`flex h-screen flex-col overflow-hidden border-r-2 border-[#123f8c] bg-[#8a8a8a] text-xs leading-4 text-[#111] ${FONT}`}>
      <TopBar />
      <main className="grid min-h-0 flex-1 grid-cols-[18px_minmax(0,771fr)_minmax(0,434fr)_307px] grid-rows-[minmax(0,1fr)_120px] gap-[2px]">
        <section className="flex flex-col overflow-hidden bg-[#313131]">
          <div className="flex h-[19px] shrink-0 items-center border-b border-[#999] bg-[#a5a5a5] pl-1"><button aria-label="Game tab menu"><Dots /></button></div>
          <Toolbar><span>Max</span></Toolbar>
        </section>
        <ScenePanel />
        <HierarchyPanel />
        <InspectorPanel />
        <ConsolePanel />
        <ProjectPanel />
      </main>
    </div>
  );
}
